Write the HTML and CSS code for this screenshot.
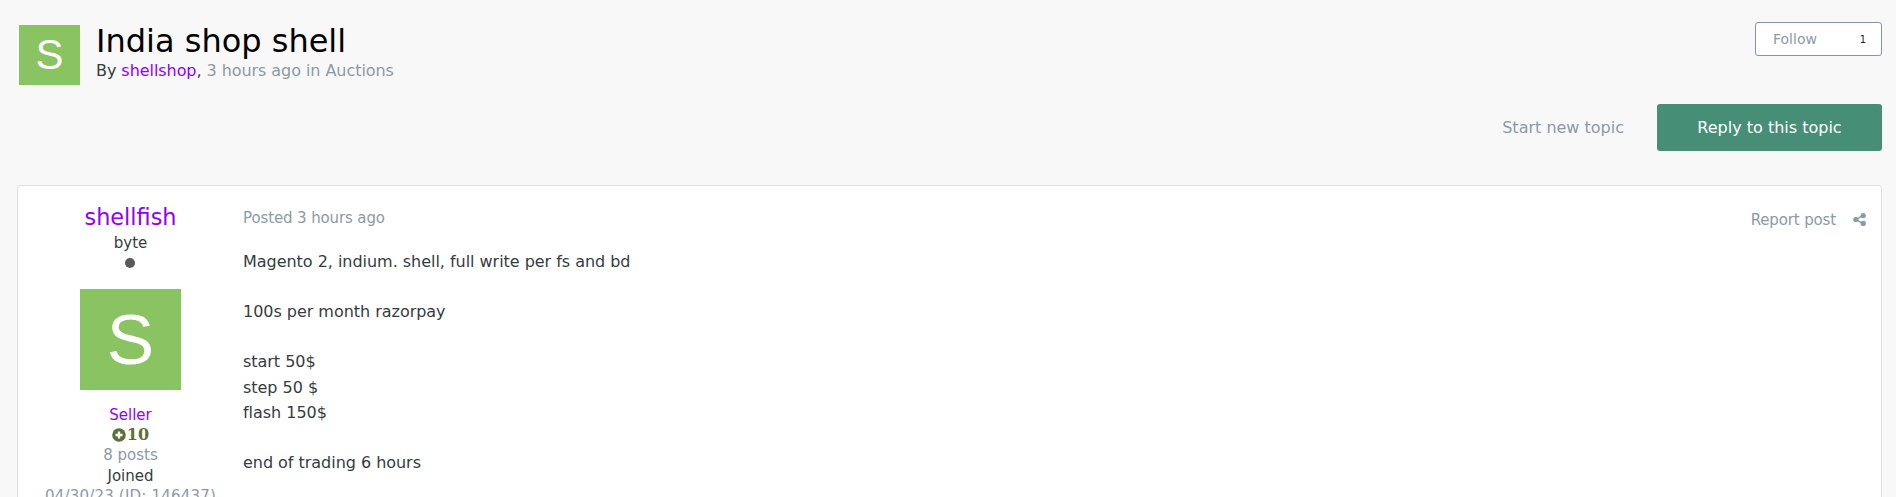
FILE: index.html
```html
<!DOCTYPE html>
<html>
<head>
    <link rel="stylesheet" href="styles.css">
</head>
<body>
    <div class="topic-header">
        <div class="avatar-small">S</div>
        <div class="topic-title">
            <h1>India shop shell</h1>
            <p>By <a class="member" href="#">shellshop</a>, <span class="muted">3 hours ago in Auctions</span></p>
        </div>
        <a class="btn-follow" href="#"><span>Follow</span><span class="follow-count">1</span></a>
    </div>

    <div class="topic-actions">
        <a class="start-topic" href="#">Start new topic</a>
        <a class="btn-reply" href="#">Reply to this topic</a>
    </div>

    <div class="post">
        <div class="author">
            <a class="author-name" href="#">shellfish</a>
            <div class="author-rank">byte</div>
            <div class="author-dot"></div>
            <div class="avatar-large">S</div>
            <div class="author-group">Seller</div>
            <div class="author-rep">
                <svg viewBox="0 0 14 14" width="14" height="14">
                    <circle cx="7" cy="7" r="6.8" fill="#5c7136"/>
                    <path d="M7 3.5v7M3.5 7h7" stroke="#fff" stroke-width="2.4"/>
                </svg>10
            </div>
            <div class="muted">8 posts</div>
            <div class="author-joined">Joined</div>
            <div class="muted author-id">04/30/23 (ID: 146437)</div>
        </div>
        <div class="post-main">
            <div class="post-meta">
                <span class="muted posted">Posted 3 hours ago</span>
                <a class="report" href="#">Report post</a>
                <svg class="share" viewBox="0 0 14 14" width="13" height="13">
                    <path d="M11 2.5 3 7l8 4.5" stroke="#8d9aa6" stroke-width="1.6" fill="none"/>
                    <circle cx="11" cy="2.8" r="2.8" fill="#8d9aa6"/>
                    <circle cx="3" cy="7" r="2.8" fill="#8d9aa6"/>
                    <circle cx="11" cy="11.2" r="2.8" fill="#8d9aa6"/>
                </svg>
            </div>
            <div class="post-body">
                <p>Magento 2, indium. shell, full write per fs and bd</p>
                <p>100s per month razorpay</p>
                <p>start 50$<br>step 50 $<br>flash 150$</p>
                <p>end of trading 6 hours</p>
            </div>
        </div>
    </div>
</body>
</html>
```

FILE: styles.css
```css
html, body {
    height: 497px;
    overflow: hidden;
}

body {
    margin: 0;
    padding: 0 14px 0 17px;
    font-family: "DejaVu Sans", sans-serif;
    font-size: 15px;
    color: #353c41;
    background-color: #f8f8f8;
}

a {
    text-decoration: none;
}

.muted {
    color: #8d9aa6;
}

.member {
    color: #8f00ff;
}

.topic-header {
    display: flex;
    align-items: flex-start;
    height: 104px;
    padding-top: 25px;
    box-sizing: border-box;
}

.avatar-small {
    width: 61px;
    height: 60px;
    margin-left: 2px;
    background: #8ac462;
    color: white;
    font: 42px/60px "Liberation Sans", sans-serif;
    text-align: center;
}

.topic-title {
    flex: 1;
    margin-left: 16px;
}

h1 {
    margin: 0;
    font-size: 32px;
    font-weight: normal;
    line-height: 32px;
    color: #000;
}

.topic-title p {
    margin: 3px 0 0;
    font-size: 16px;
    line-height: 22px;
    letter-spacing: -0.06px;
}

.btn-follow {
    display: flex;
    justify-content: space-between;
    align-items: center;
    width: 127px;
    height: 34px;
    margin-top: -3px;
    padding: 0 15px 0 17px;
    box-sizing: border-box;
    background: white;
    border: 1px solid #8595a5;
    border-radius: 3px;
    color: #8d9aa6;
    font-size: 14px;
}

.follow-count {
    color: #222;
    font-size: 10px;
}

.topic-actions {
    display: flex;
    justify-content: flex-end;
    align-items: center;
    gap: 33px;
    height: 47px;
}

.start-topic {
    color: #8d9aa6;
    font-size: 16px;
}

.btn-reply {
    width: 225px;
    height: 47px;
    background: #478e76;
    border-radius: 3px;
    color: white;
    font-size: 16px;
    line-height: 47px;
    text-align: center;
}

.post {
    display: flex;
    margin-top: 34px;
    height: 400px;
    background: white;
    border: 1px solid #e0e0e0;
    border-radius: 3px;
}

.author {
    width: 225px;
    flex: none;
    text-align: center;
    line-height: 20px;
}

.author-name {
    display: block;
    margin-top: 17px;
    color: #8f00ff;
    font-size: 22.4px;
    line-height: 28px;
}

.author-rank {
    margin-top: 2px;
}

.author-dot {
    width: 10px;
    height: 10px;
    margin: 5px 0 0 107px;
    border-radius: 50%;
    background: #58595b;
}

.avatar-large {
    width: 101px;
    height: 101px;
    margin: 21px auto 0;
    background: #8ac462;
    color: white;
    font: 71px/101px "Liberation Sans", sans-serif;
}

.author-group {
    margin-top: 15px;
    color: #8f00ff;
}

.author-rep {
    display: flex;
    justify-content: center;
    align-items: center;
    gap: 1px;
    color: #5c7136;
    font: bold 16px/20px "DejaVu Serif", serif;
}

.author-joined {
    margin-top: 1px;
}

.author-id {
    letter-spacing: 0.2px;
}

.post-main {
    flex: 1;
    padding: 0 15px 0 0;
}

.post-meta {
    display: flex;
    align-items: center;
    height: 30px;
    margin-top: 17px;
}

.posted {
    letter-spacing: -0.12px;
}

.report {
    margin: 3px 0 0 auto;
    color: #8d9aa6;
    letter-spacing: -0.14px;
}

.share {
    margin: 3px 0 0 17px;
}

.post-body {
    margin-top: 15.6px;
    font-size: 16px;
    line-height: 25.2px;
    letter-spacing: -0.03px;
}

.post-body p {
    margin: 0 0 25.2px;
}
```
